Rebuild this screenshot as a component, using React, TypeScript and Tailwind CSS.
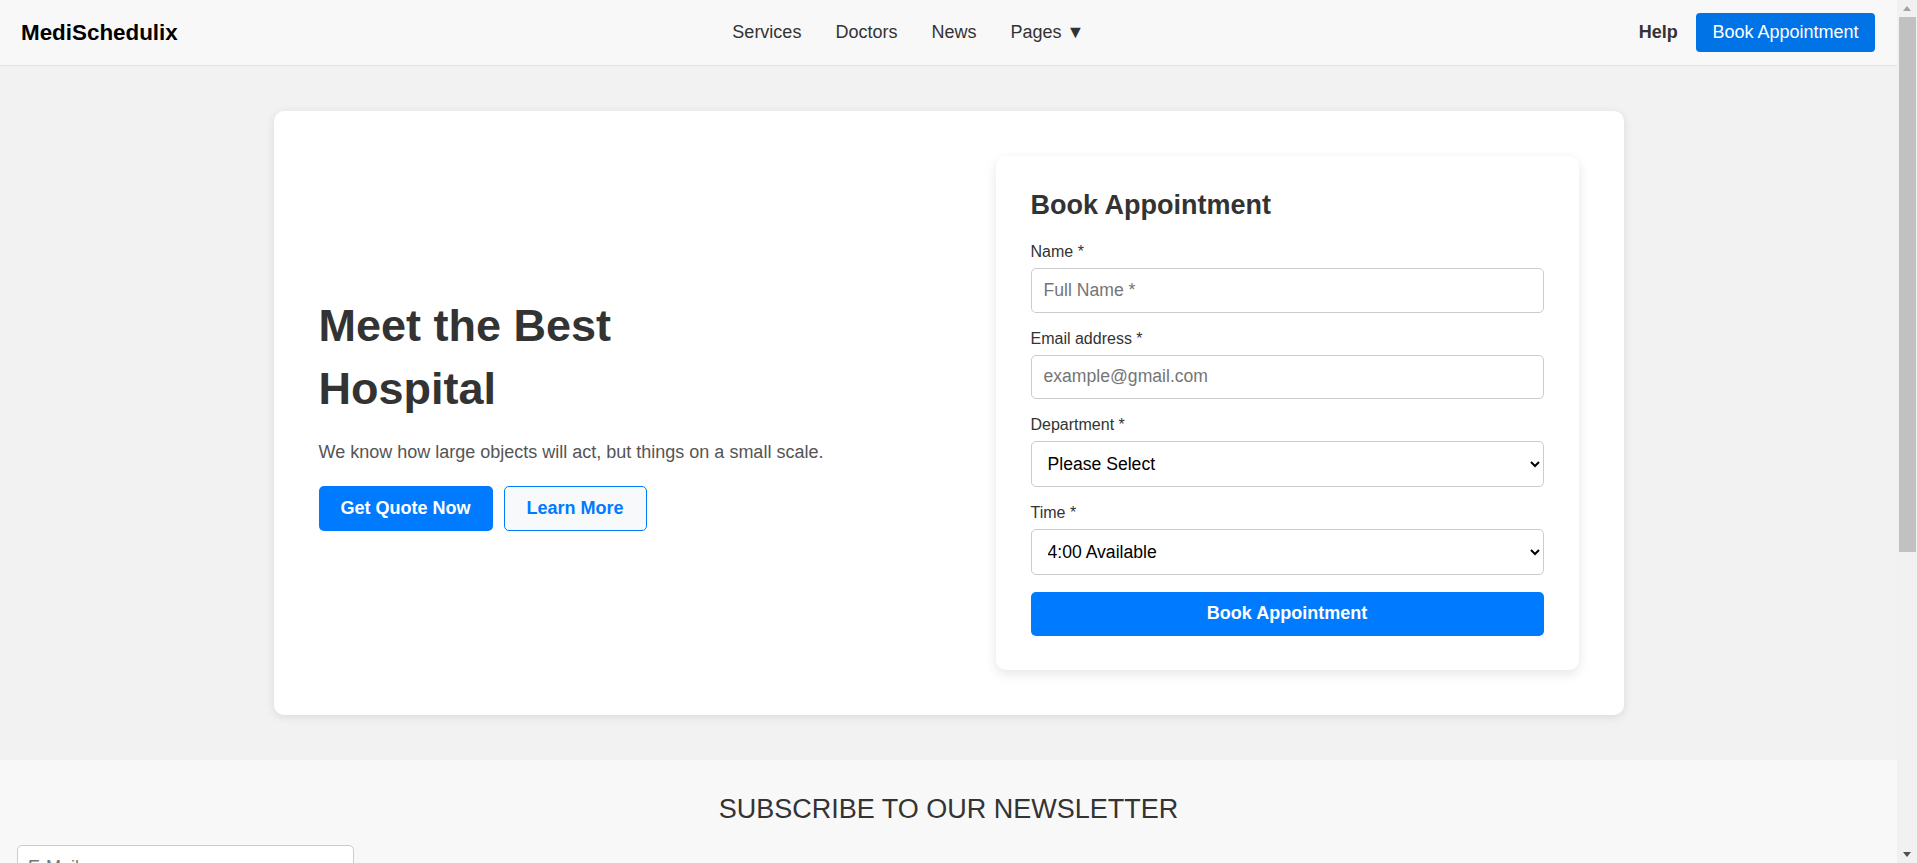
import React from "react"

const navLinks = ["Services", "Doctors", "News"]

function Field({ label, children }: { label: string; children: React.ReactNode }) {
  return (
    <div className="flex flex-col">
      <label className="text-[16px] leading-[18.4px] text-[#333] mb-[6.5px]">{label}</label>
      {children}
    </div>
  )
}

function Scrollbar() {
  return (
    <div className="sticky top-0 w-[20px] h-[863px] shrink-0 bg-[#f1f1f1] flex flex-col items-end">
      <svg width="20" height="17" viewBox="0 0 20 17" className="shrink-0">
        <polygon points="6,11 14,11 10,6" fill="#a3a3a3" />
      </svg>
      <div className="w-[17px] mr-[1px] h-[535px] bg-[#c1c1c1]" />
      <div className="flex-1" />
      <svg width="20" height="17" viewBox="0 0 20 17" className="shrink-0">
        <polygon points="6,6 14,6 10,11" fill="#505050" />
      </svg>
    </div>
  )
}

export default function App() {
  return (
    <div className="flex items-start font-['Liberation_Sans',Arial,sans-serif] leading-[normal] text-[#333]">
      <div className="flex-1 min-w-0">
        <header className="h-[66px] bg-[#f8f8f8] border-b border-[#e2e2e2] flex items-center justify-between pl-[21px] pr-[22px]">
          <div className="text-[22.4px] font-bold text-black">MediSchedulix</div>
          <nav className="flex items-center gap-[34px] text-[18px] text-[#333]">
            {navLinks.map((l) => (
              <a key={l} href="#">
                {l}
              </a>
            ))}
            <a href="#">Pages ▼</a>
          </nav>
          <div className="flex items-center gap-[18px]">
            <a href="#" className="text-[18px] font-bold text-[#333]">
              Help
            </a>
            <button className="h-[39px] px-[16.5px] rounded-[4px] bg-[#0073e6] text-white text-[18px]">
              Book Appointment
            </button>
          </div>
        </header>

        <section className="bg-[#f2f2f2] py-[45px]">
          <div className="w-[1350px] mx-auto bg-white rounded-[10px] shadow-[0_2px_10px_rgba(0,0,0,0.1)] p-[45px] flex items-center justify-between">
            <div className="flex-1">
              <h1 className="text-[45px] leading-[63px] font-bold text-[#333] max-w-[400px]">
                Meet the Best Hospital
              </h1>
              <p className="text-[18px] text-[#555] mt-[22px] mb-[23px]">
                We know how large objects will act, but things on a small scale.
              </p>
              <div className="flex gap-[11px]">
                <button className="h-[45px] px-[22px] rounded-[5px] bg-[#007bff] text-white text-[18px] font-bold">
                  Get Quote Now
                </button>
                <button className="h-[45px] px-[22px] rounded-[5px] bg-[#f8f9fa] border border-[#007bff] text-[#007bff] text-[18px] font-bold">
                  Learn More
                </button>
              </div>
            </div>

            <div className="w-[583px] bg-white rounded-[10px] shadow-[0_4px_12px_rgba(0,0,0,0.1)] p-[35px] pt-[34px] pb-[34px]">
              <h2 className="text-[27px] font-bold text-[#333] mb-[22px]">Book Appointment</h2>
              <div className="flex flex-col gap-[17px]">
                <Field label="Name *">
                  <input
                    type="text"
                    placeholder="Full Name *"
                    className="h-[45px] w-full border border-[#ccc] rounded-[5px] px-[12px] text-[17.6px] placeholder:text-[#757575] outline-none"
                  />
                </Field>
                <Field label="Email address *">
                  <input
                    type="email"
                    placeholder="example@gmail.com"
                    className="h-[44px] w-full border border-[#ccc] rounded-[5px] px-[12px] text-[17.6px] placeholder:text-[#757575] outline-none"
                  />
                </Field>
                <Field label="Department *">
                  <select className="h-[46px] w-full border border-[#ccc] rounded-[5px] px-[12px] text-[17.6px] bg-white text-black">
                    <option>Please Select</option>
                    <option>Cardiology</option>
                    <option>Neurology</option>
                  </select>
                </Field>
                <Field label="Time *">
                  <select className="h-[46px] w-full border border-[#ccc] rounded-[5px] px-[12px] text-[17.6px] bg-white text-black">
                    <option>4:00 Available</option>
                    <option>5:00 Available</option>
                  </select>
                </Field>
                <button className="h-[44px] w-full rounded-[5px] bg-[#007bff] text-white text-[18px] font-bold">
                  Book Appointment
                </button>
              </div>
            </div>
          </div>
        </section>

        <section className="bg-[#f8f8f8] pt-[34px] pb-[40px] px-[17px]">
          <h2 className="text-[27px] text-center text-[#333] mb-[20px]">SUBSCRIBE TO OUR NEWSLETTER</h2>
          <input
            type="email"
            placeholder="E-Mail"
            className="h-[45px] w-[337px] border border-[#ccc] rounded-[5px] px-[10px] text-[18px] bg-white placeholder:text-[#757575] outline-none"
          />
        </section>
      </div>
      <Scrollbar />
    </div>
  )
}
